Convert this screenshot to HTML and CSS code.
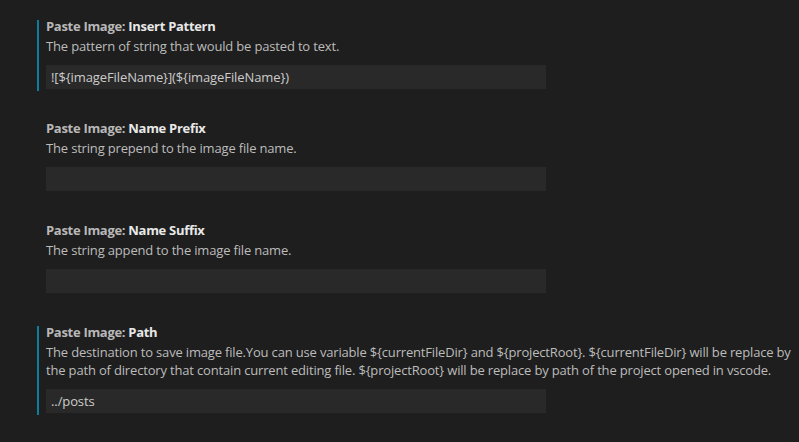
FILE: index.html
```html
<!DOCTYPE html>
<html>
<head>
<meta charset="utf-8">
<link rel="stylesheet" href="styles.css">
</head>
<body>
<div class="list">
  <div class="item modified">
    <div class="title"><span class="cat">Paste Image: </span><span class="label">Insert Pattern</span></div>
    <div class="desc">The pattern of string that would be pasted to text.</div>
    <div class="input">![${imageFileName}](${imageFileName})</div>
  </div>
  <div class="item">
    <div class="title"><span class="cat">Paste Image: </span><span class="label">Name Prefix</span></div>
    <div class="desc">The string prepend to the image file name.</div>
    <div class="input"></div>
  </div>
  <div class="item">
    <div class="title"><span class="cat">Paste Image: </span><span class="label">Name Suffix</span></div>
    <div class="desc">The string append to the image file name.</div>
    <div class="input"></div>
  </div>
  <div class="item modified">
    <div class="title"><span class="cat">Paste Image: </span><span class="label">Path</span></div>
    <div class="desc">The destination to save image file.You can use variable ${currentFileDir} and ${projectRoot}. ${currentFileDir} will be replace by the path of directory that contain current editing file. ${projectRoot} will be replace by path of the project opened in vscode.</div>
    <div class="input">../posts</div>
  </div>
</div>
</body>
</html>
```
FILE: styles.css
```css
html, body {
  margin: 0;
  padding: 0;
  background: #1e1e1e;
  height: 100%;
  overflow: hidden;
}
body {
  font-family: "Open Sans", "Noto Sans", sans-serif;
  font-size: 13px;
  color: #cccccc;
}
.list {
  display: flex;
  flex-direction: column;
  gap: 31px;
  padding-top: 20px;
  padding-left: 37px;
  padding-right: 2px;
}
.item {
  border-left: 2px solid transparent;
  padding-left: 7px;
  padding-bottom: 2px;
}
.item.modified {
  border-left-color: #0c7d9d;
}
.title {
  line-height: 12px;
  font-weight: 700;
  white-space: nowrap;
  letter-spacing: -0.3px;
}
.cat {
  color: #b8b8b8;
}
.label {
  color: #e8e8e8;
}
.desc {
  margin-top: 5px;
  line-height: 18px;
  color: #bcbcbc;
  letter-spacing: -0.17px;
}
.input {
  margin-top: 10px;
  width: 500px;
  height: 24px;
  box-sizing: border-box;
  background: #292929;
  color: #cccccc;
  line-height: 24px;
  padding-left: 5px;
  letter-spacing: -0.1px;
}
```
